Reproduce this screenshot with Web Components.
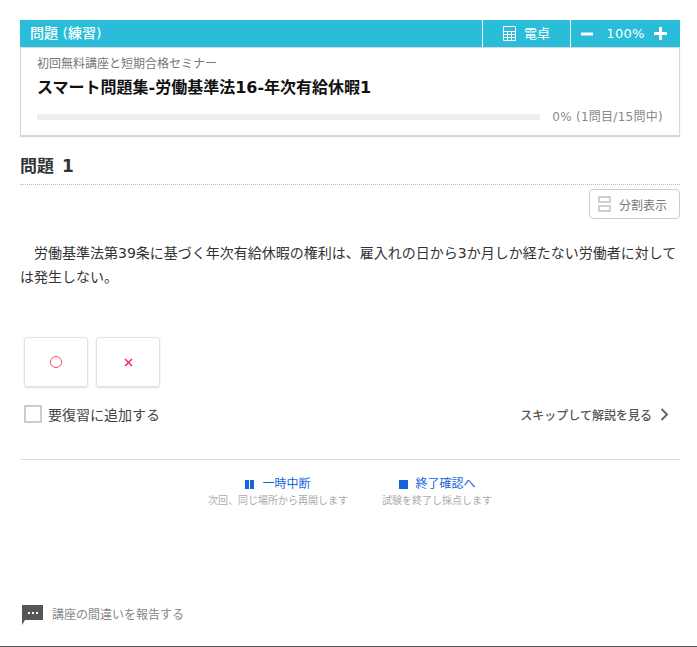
<!DOCTYPE html>
<html lang="ja">
<head>
<meta charset="utf-8">
<title>問題</title>
<style>
html, body { margin: 0; padding: 0; background: #fff; }
body { font-family: "DejaVu Sans", "Noto Sans CJK JP", sans-serif; color: #333; }
</style>
</head>
<body>
<exam-page></exam-page>
<script>
class ExamHeader extends HTMLElement {
    constructor() {
        super();
        this.attachShadow({ mode: 'open' }).innerHTML = `
            <style>
                :host { display: block; }
                .bar { display: flex; height: 27px; background: #2abdd9; color: #fff; font-size: 13px; line-height: 27px; }
                .title { flex: 1; padding-left: 10px; font-size: 14px; font-weight: 500; }
                .calc { width: 88px; box-sizing: border-box; display: flex; align-items: center; justify-content: center; gap: 8px; border-left: 1px solid #fff; }
                .zoom { width: 110px; display: flex; align-items: center; justify-content: space-between; padding: 0 13px 0 10px; box-sizing: border-box; border-left: 1px solid #fff; }
                .zoom span { letter-spacing: .3px; margin-left: 4px; }
                .card { height: 89px; box-sizing: border-box; padding: 8px 16px 0; border: 1px solid #d8d8dc; box-shadow: 0 1px 1px #d8d8dc; }
                .school { font-size: 12px; line-height: 16px; color: #777; }
                .name { margin-top: 4px; font-size: 16px; line-height: 23px; font-weight: 700; color: #111; }
                .progress { display: flex; align-items: center; gap: 12px; margin-top: 9px; font-size: 12px; line-height: 18px; color: #888; }
                .progress span { letter-spacing: .27px; }
                .track { flex: 1; height: 6px; background: #eee; }
            </style>
            <div class="bar">
                <div class="title">問題 (練習)</div>
                <div class="calc">
                    <svg width="13" height="15" viewBox="0 0 13 15" fill="none" stroke="#fff" stroke-width="1"><path d="M.5.5h12v14H.5zM.5 5.5h12M.5 8.5h12M.5 11.5h12M4.5 5.5v9M8.5 5.5v9"/></svg>
                    <span>電卓</span>
                </div>
                <div class="zoom">
                    <svg width="12" height="12" viewBox="0 0 12 12"><path d="M0 4.5h12v3H0z" fill="#fff"/></svg>
                    <span>100%</span>
                    <svg width="13" height="13" viewBox="0 0 13 13"><path d="M5 0h3v5h5v3H8v5H5V8H0V5h5z" fill="#fff"/></svg>
                </div>
            </div>
            <div class="card">
                <div class="school"><slot name="school"></slot></div>
                <div class="name"><slot name="name"></slot></div>
                <div class="progress"><div class="track"></div><span><slot name="progress"></slot></span></div>
            </div>`;
    }
}

class AnswerButton extends HTMLElement {
    constructor() {
        super();
        this.attachShadow({ mode: 'open' }).innerHTML = `
            <style>
                :host { display: flex; width: 64px; height: 50px; align-items: center; justify-content: center; box-sizing: border-box; border: 1px solid #e2e2e2; border-radius: 3px; box-shadow: 0 1px 2px #ddd; background: #fff; }
            </style>
            <slot></slot>`;
    }
}

class ActionLink extends HTMLElement {
    constructor() {
        super();
        this.attachShadow({ mode: 'open' }).innerHTML = `
            <style>
                :host { display: block; text-align: center; }
                .main { display: flex; justify-content: center; align-items: center; gap: 8px; font-size: 12px; line-height: 16px; color: #1565d8; }
                .sub { margin-top: 2px; font-size: 10px; line-height: 14px; color: #aaa; }
            </style>
            <div class="main"><slot name="icon"></slot><slot name="label"></slot></div>
            <div class="sub"><slot name="sub"></slot></div>`;
    }
}

class ExamPage extends HTMLElement {
    constructor() {
        super();
        this.attachShadow({ mode: 'open' }).innerHTML = `
            <style>
                :host { display: flex; flex-direction: column; height: 647px; box-sizing: border-box; padding: 20px 17px 0 20px; border-bottom: 1px solid #555; overflow: hidden; }
                h2 { margin: 19px 0 0; padding: 0 0 6px 0; font-size: 17px; line-height: 23px; font-weight: 700; word-spacing: 2px; border-bottom: 1px dotted #bbb; color: #333; }
                .tools { display: flex; justify-content: flex-end; margin-top: 4px; }
                .split { display: flex; align-items: center; gap: 8px; width: 91px; height: 30px; box-sizing: border-box; padding-left: 8px; border: 1px solid #ccc; border-radius: 4px; font-size: 12px; color: #777; }
                .question { margin: 22px 0 0; font-size: 14px; line-height: 24px; color: #333; text-indent: 14px; }
                .answers { display: flex; gap: 8px; margin: 48px 0 0 4px; }
                .row { display: flex; align-items: center; justify-content: space-between; margin: 9px 0 0 4px; height: 36px; }
                .check { display: flex; align-items: center; gap: 6px; font-size: 14px; color: #444; }
                .box { width: 18px; height: 18px; box-sizing: border-box; border: 2px solid #ccc; }
                .skip { display: flex; align-items: center; gap: 8px; padding-right: 11px; font-size: 12px; font-weight: 500; color: #555; }
                .actions { display: flex; justify-content: center; gap: 34px; margin-top: 27px; padding-top: 16px; border-top: 1px solid #ddd; }
                .report { display: flex; align-items: center; gap: 9px; margin: auto 0 21px 2px; font-size: 12px; color: #888; }
                .report span { line-height: 16px; }
                .pause { display: block; width: 9px; height: 9px; background: linear-gradient(90deg, #1565d8 0 4px, transparent 4px 5px, #1565d8 5px); }
                .stop { display: block; width: 9px; height: 9px; margin: 0 -1px 0 1px; background: #1565d8; }
            </style>
            <exam-header>
                <span slot="school">初回無料講座と短期合格セミナー</span>
                <span slot="name">スマート問題集-労働基準法16-年次有給休暇1</span>
                <span slot="progress">0% (1問目/15問中)</span>
            </exam-header>
            <h2>問題 1</h2>
            <div class="tools">
                <div class="split">
                    <svg width="13" height="16" viewBox="0 0 13 16" fill="none" stroke="#d0d0d0" stroke-width="2"><path d="M1 1h11v5H1zM1 10h11v5H1z"/></svg>
                    <span>分割表示</span>
                </div>
            </div>
            <p class="question">労働基準法第39条に基づく年次有給休暇の権利は、雇入れの日から3か月しか経たない労働者に対しては発生しない。</p>
            <div class="answers">
                <answer-button><svg width="12" height="12" viewBox="0 0 12 12"><circle cx="6" cy="6" r="5.5" fill="none" stroke="#f0506e"/></svg></answer-button>
                <answer-button><svg width="9" height="9" viewBox="0 0 9 9"><path d="M1 1l7 7M8 1L1 8" stroke="#f5305e" stroke-width="1.6"/></svg></answer-button>
            </div>
            <div class="row">
                <div class="check"><span class="box"></span><span>要復習に追加する</span></div>
                <div class="skip"><span>スキップして解説を見る</span>
                    <svg width="9" height="13" viewBox="0 0 9 13" fill="none" stroke="#666" stroke-width="2"><path d="M1.5 1l5.5 5.5L1.5 12"/></svg>
                </div>
            </div>
            <div class="actions">
                <action-link><i slot="icon" class="pause"></i><span slot="label">一時中断</span><span slot="sub">次回、同じ場所から再開します</span></action-link>
                <action-link><i slot="icon" class="stop"></i><span slot="label">終了確認へ</span><span slot="sub">試験を終了し採点します</span></action-link>
            </div>
            <div class="report">
                <svg width="21" height="20" viewBox="0 0 21 20"><path d="M0 0h21v15H3l-3 5z" fill="#555"/><path d="M6 7h2v2H6zM10 7h2v2h-2zM14 7h2v2h-2z" fill="#fff"/></svg>
                <span>講座の間違いを報告する</span>
            </div>`;
    }
}

customElements.define('exam-header', ExamHeader);
customElements.define('answer-button', AnswerButton);
customElements.define('action-link', ActionLink);
customElements.define('exam-page', ExamPage);
</script>
</body>
</html>
